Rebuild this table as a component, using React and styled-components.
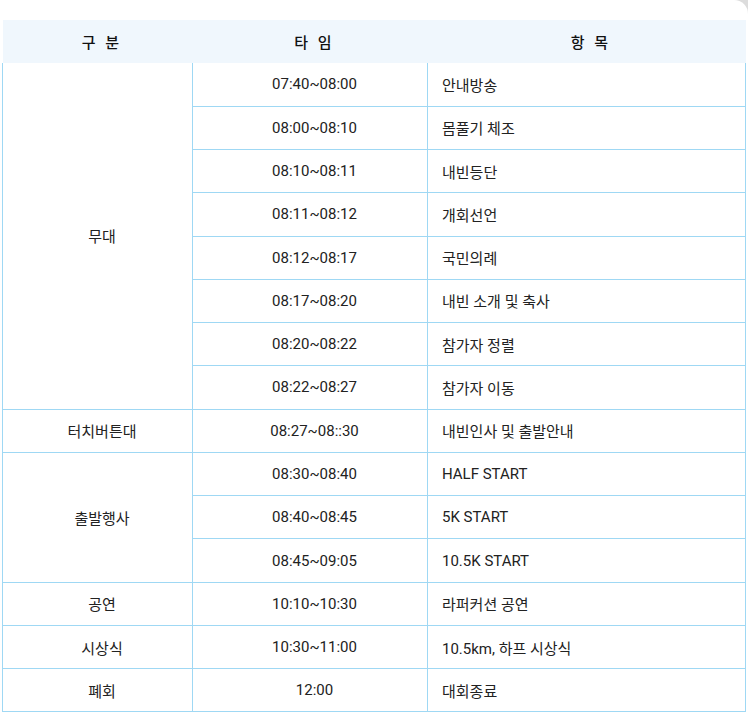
import React from 'react';
import styled, { createGlobalStyle } from 'styled-components';

const GlobalStyle = createGlobalStyle`
  html, body {
    margin: 0;
    padding: 0;
    background: #dcdcdc;
  }
  body {
    font-family: Roboto, "Noto Sans CJK KR", sans-serif;
    color: #222;
  }
`;

const Panel = styled.div`
  background: #fff;
  border-top-right-radius: 14px;
  padding: 20px 3px 6px 2px;
  min-height: 719px;
  box-sizing: border-box;
`;

const Table = styled.table`
  width: 743px;
  border-collapse: collapse;
  table-layout: fixed;
  font-size: 15px;

  tbody tr:first-child td {
    border-top: none;
  }
`;

const HeadCell = styled.th`
  height: 43px;
  padding: 0 0 0 9px;
  background: #f0f7fd;
  font-weight: 500;
  color: #111;
  text-align: center;
  letter-spacing: 3px;
`;

const Row = styled.tr`
  height: 43.27px;
`;

const Cell = styled.td`
  padding: ${({ $left }) => ($left ? '0 0 0 14px' : '0 0 0 9px')};
  border: 1px solid #9fd8f4;
  text-align: ${({ $left }) => ($left ? 'left' : 'center')};
  vertical-align: middle;
  color: #222;
`;

const schedule = [
  { group: '무대', span: 8, time: '07:40~08:00', item: '안내방송' },
  { time: '08:00~08:10', item: '몸풀기 체조' },
  { time: '08:10~08:11', item: '내빈등단' },
  { time: '08:11~08:12', item: '개회선언' },
  { time: '08:12~08:17', item: '국민의례' },
  { time: '08:17~08:20', item: '내빈 소개 및 축사' },
  { time: '08:20~08:22', item: '참가자 정렬' },
  { time: '08:22~08:27', item: '참가자 이동' },
  { group: '터치버튼대', span: 1, time: '08:27~08::30', item: '내빈인사 및 출발안내' },
  { group: '출발행사', span: 3, time: '08:30~08:40', item: 'HALF START' },
  { time: '08:40~08:45', item: '5K START' },
  { time: '08:45~09:05', item: '10.5K START' },
  { group: '공연', span: 1, time: '10:10~10:30', item: '라퍼커션 공연' },
  { group: '시상식', span: 1, time: '10:30~11:00', item: '10.5km, 하프 시상식' },
  { group: '폐회', span: 1, time: '12:00', item: '대회종료' },
];

const App = () => (
  <>
    <GlobalStyle />
    <Panel>
      <Table>
        <colgroup>
          <col style={{ width: '190px' }} />
          <col style={{ width: '235px' }} />
          <col style={{ width: '318px' }} />
        </colgroup>
        <thead>
          <tr>
            <HeadCell>구 분</HeadCell>
            <HeadCell>타 임</HeadCell>
            <HeadCell>항 목</HeadCell>
          </tr>
        </thead>
        <tbody>
          {schedule.map((row, i) => (
            <Row key={i}>
              {row.group && <Cell rowSpan={row.span}>{row.group}</Cell>}
              <Cell>{row.time}</Cell>
              <Cell $left>{row.item}</Cell>
            </Row>
          ))}
        </tbody>
      </Table>
    </Panel>
  </>
);

export default App;
